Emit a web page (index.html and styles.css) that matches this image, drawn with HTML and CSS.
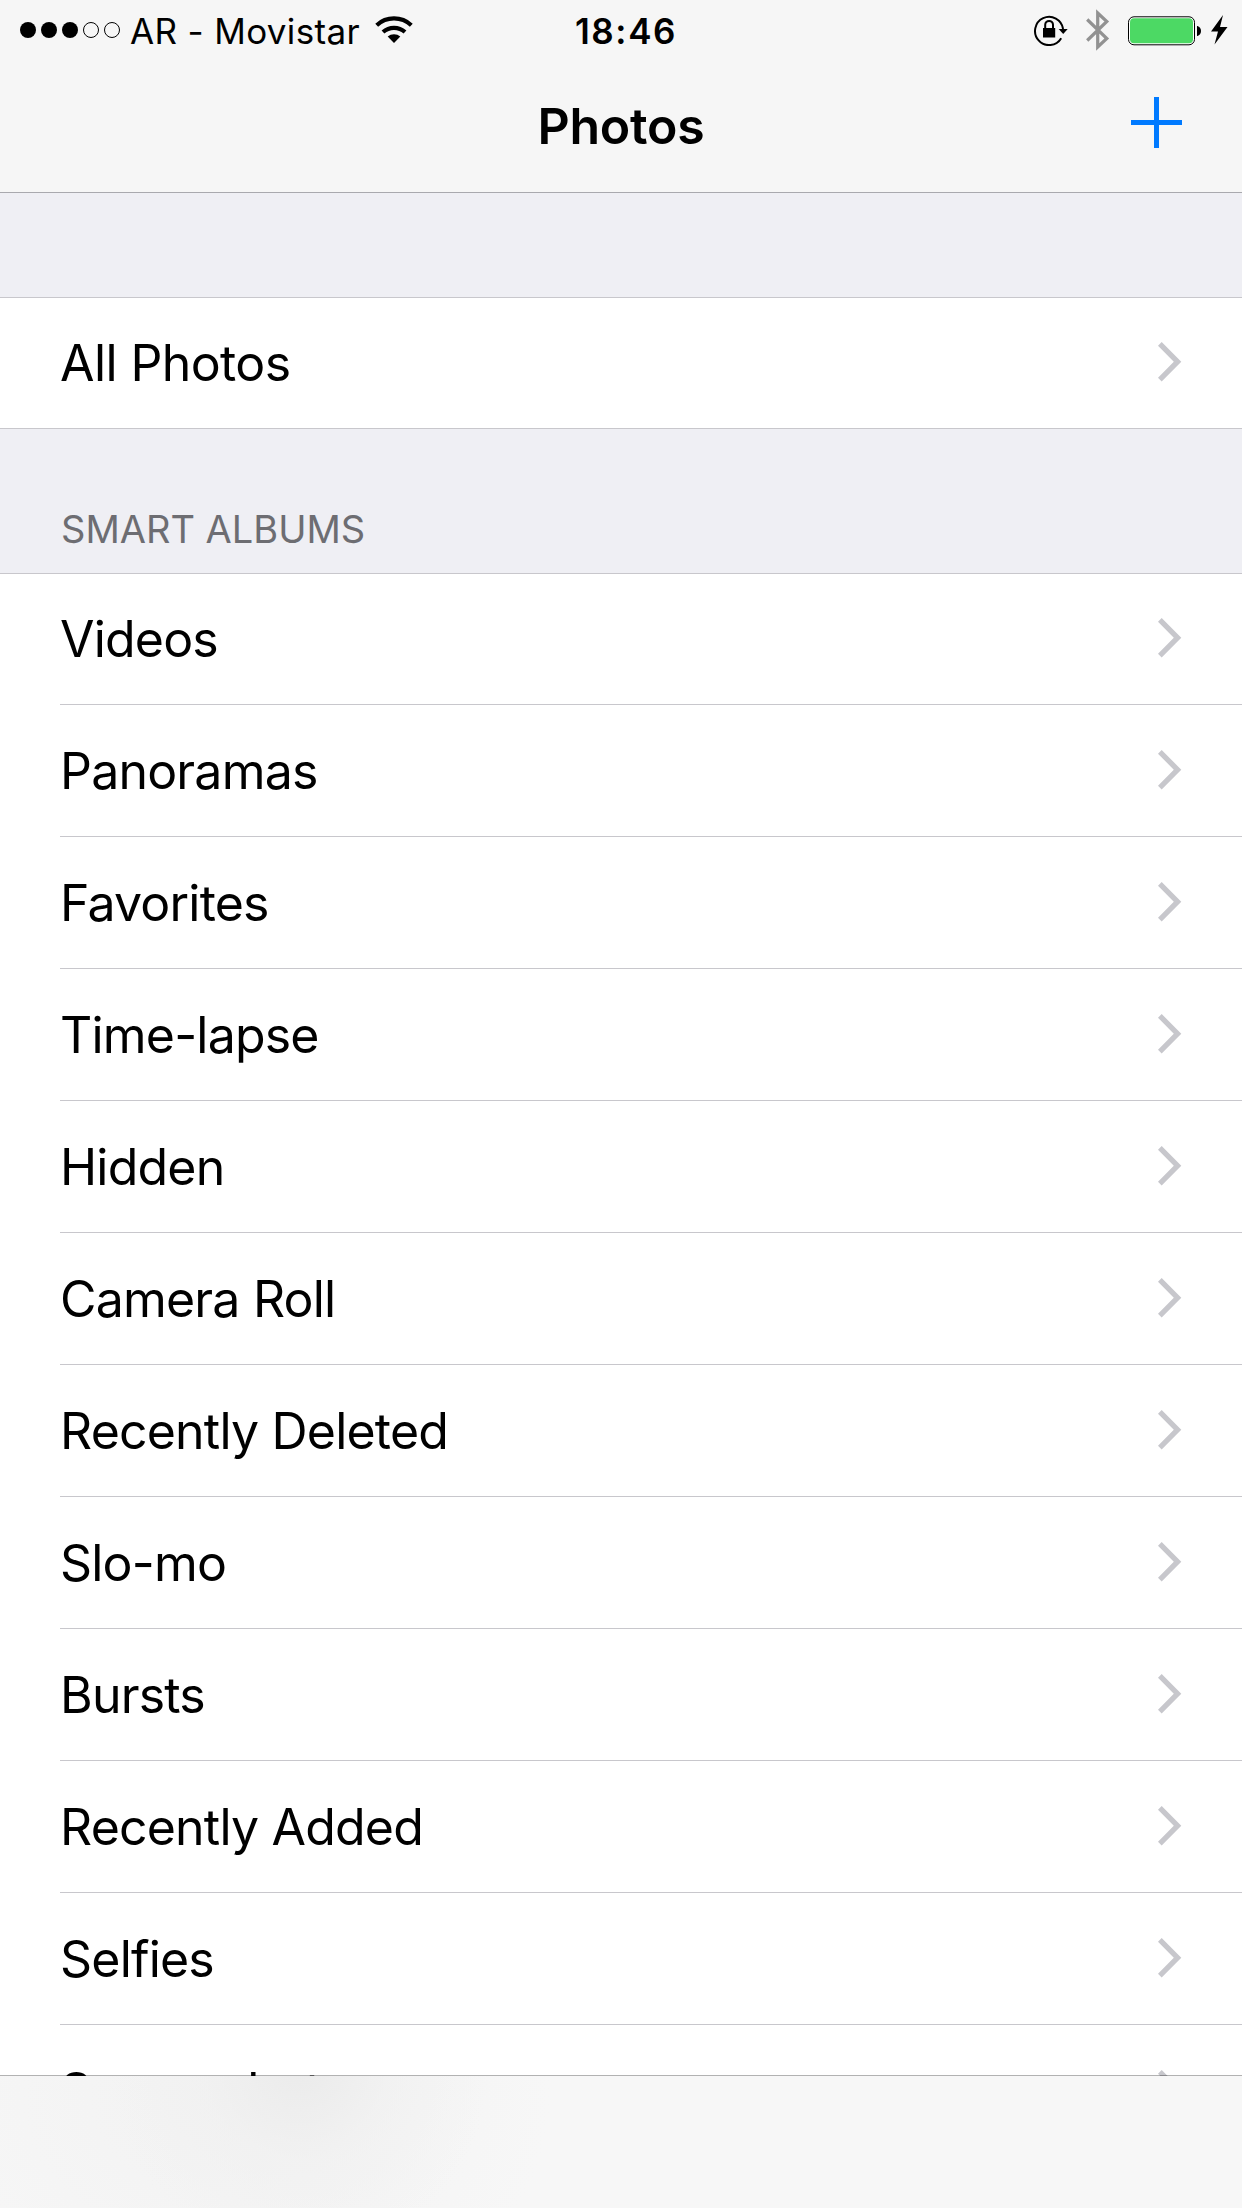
FILE: index.html
```html
<!DOCTYPE html>
<html lang="en">
<head>
<meta charset="utf-8">
<title>Photos</title>
<link rel="stylesheet" href="styles.css">
</head>
<body>
<svg class="defs" width="0" height="0"><symbol id="chevron" viewBox="0 0 24 40"><path d="M3.700 0 23.300 19.700 3.700 39.400 0 35.700 15.800 19.700 0 3.700z" fill="#c7c7cc"/></symbol></svg>
<header class="top">
  <div class="status">
    <div class="status-left">
      <svg width="100" height="16" viewBox="0 0 100 16"><circle cx="8" cy="8" r="8"/><circle cx="29" cy="8" r="8"/><circle cx="50" cy="8" r="8"/><g fill="none" stroke="#000"><circle cx="71" cy="8" r="7.500"/><circle cx="92" cy="8" r="7.500"/></g></svg>
      <span class="carrier">AR - Movistar</span>
      <svg class="wifi" width="38" height="28" viewBox="0 0 38 28"><g fill="none" stroke="#000" stroke-width="4.200"><path d="M1.700 9.200a25.500 25.500 0 0 1 34.600 0"/><path d="M8 16a16.500 16.500 0 0 1 22 0"/></g><path d="M19 27 12.700 20.600a9.300 9.300 0 0 1 12.600 0z"/></svg>
    </div>
    <time class="clock">18:46</time>
    <div class="status-right">
      <svg class="lock" width="35" height="32" viewBox="0 0 35 32"><path d="M27.200 24.300A14.100 14.100 0 1 1 29.100 15" fill="none" stroke="#000" stroke-width="2"/><path d="M24.700 15h9l-4.500 5z"/><path d="M9 14h12.200v9.500H9z"/><path d="M11.200 14v-3.200a3.900 3.900 0 0 1 7.800 0V14" fill="none" stroke="#000" stroke-width="2"/></svg>
      <svg class="bluetooth" width="24" height="42" viewBox="0 0 24 42"><path d="M1.200 10.500 20.800 29.500 11.700 38V4L20.800 12.500 1.200 31.500" fill="none" stroke="#929292" stroke-width="3.200"/></svg>
      <svg class="battery" width="74" height="30" viewBox="0 0 74 30"><rect x=".5" y=".8" width="66" height="28" rx="5.500" fill="#fff" stroke="#000"/><rect x="2" y="2.300" width="63" height="25" rx="4" fill="#4cd964"/><path d="M69 10h.5c2 .5 3.500 2.500 3.500 5s-1.500 4.500-3.500 5H69z"/></svg>
      <svg class="bolt" width="17" height="30" viewBox="0 0 17 30"><path d="M12 0 0 16.500h7L3.500 29.500 16.500 12H9z"/></svg>
    </div>
  </div>
  <nav class="nav">
    <h1>Photos</h1>
    <svg class="add" width="51" height="51" viewBox="0 0 51 51"><path d="M23 0h5v23h23v5H28v23h-5V28H0v-5h23z" fill="#007aff"/></svg>
  </nav>
</header>
<main class="list">
  <section class="group all">
    <a class="row"><span>All Photos</span><svg class="chevron"><use href="#chevron"/></svg></a>
  </section>
  <h2>SMART ALBUMS</h2>
  <section class="group">
    <a class="row"><span>Videos</span><svg class="chevron"><use href="#chevron"/></svg></a>
    <a class="row"><span>Panoramas</span><svg class="chevron"><use href="#chevron"/></svg></a>
    <a class="row"><span>Favorites</span><svg class="chevron"><use href="#chevron"/></svg></a>
    <a class="row"><span>Time-lapse</span><svg class="chevron"><use href="#chevron"/></svg></a>
    <a class="row"><span>Hidden</span><svg class="chevron"><use href="#chevron"/></svg></a>
    <a class="row"><span>Camera Roll</span><svg class="chevron"><use href="#chevron"/></svg></a>
    <a class="row"><span>Recently Deleted</span><svg class="chevron"><use href="#chevron"/></svg></a>
    <a class="row"><span>Slo-mo</span><svg class="chevron"><use href="#chevron"/></svg></a>
    <a class="row"><span>Bursts</span><svg class="chevron"><use href="#chevron"/></svg></a>
    <a class="row"><span>Recently Added</span><svg class="chevron"><use href="#chevron"/></svg></a>
    <a class="row"><span>Selfies</span><svg class="chevron"><use href="#chevron"/></svg></a>
    <a class="row"><span>Screenshots</span><svg class="chevron"><use href="#chevron"/></svg></a>
  </section>
</main>
<footer class="toolbar"></footer>
</body>
</html>
```
FILE: styles.css
```css
* { box-sizing: border-box; }
body {
  margin: 0;
  height: 2208px;
  display: flex;
  flex-direction: column;
  overflow: hidden;
  background: #efeff4;
  color: #000;
  font-family: Inter, "Liberation Sans", sans-serif;
}
svg { display: block; flex: none; }
.defs { display: none; }

.top {
  flex: none;
  height: 193px;
  background: #f6f6f6;
  border-bottom: 1px solid #a9a9ae;
}
.status {
  display: grid;
  grid-template-columns: 1fr auto 1fr;
  height: 60px;
  padding: 0 14px 0 20px;
  font-size: 35px;
  line-height: 62px;
}
.status-left, .status-right { display: flex; align-items: flex-start; }
.status-left > svg:first-child { margin-top: 22px; }
.carrier { margin-left: 10px; letter-spacing: .35px; white-space: nowrap; }
.wifi { margin: 16px 0 0 15px; }
.clock { padding-left: 4px; font-weight: 600; letter-spacing: 1.6px; }
.status-right { justify-content: flex-end; }
.lock { margin: 14px 17px 0 0; }
.bluetooth { margin: 9px 18px 0 0; }
.battery { margin: 16px 9px 0 0; }
.bolt { margin-top: 15px; }

.nav {
  display: grid;
  grid-template-columns: 1fr auto 1fr;
  height: 132px;
  padding: 0 60px;
}
h1 {
  grid-column: 2;
  margin: 0;
  font-size: 50px;
  font-weight: 600;
  line-height: 132px;
  letter-spacing: -.2px;
}
.add { justify-self: end; margin-top: 37px; }

.list { flex: 1; min-height: 0; overflow: hidden; padding-top: 104px; }
.group {
  background: #fff;
  border-top: 1px solid #c8c7cc;
}
.all { border-bottom: 1px solid #c8c7cc; }
.row {
  display: flex;
  align-items: center;
  justify-content: space-between;
  height: 132px;
  margin-left: 60px;
  padding-right: 60px;
  border-bottom: 1px solid #c8c7cc;
  font-size: 50px;
  letter-spacing: -.8px;
}
.row:first-child { height: 131px; }
.all .row:first-child { height: 130px; border: 0; letter-spacing: -.6px; }
.chevron { width: 24px; height: 40px; margin-bottom: 1px; }
.row:first-child .chevron { margin-bottom: 2px; }
h2 {
  height: 144px;
  margin: 0;
  padding: 75px 61px 0;
  color: #6d6d72;
  font-size: 38px;
  font-weight: 400;
  line-height: 50px;
}

.toolbar {
  flex: none;
  position: relative;
  height: 133px;
  margin-top: -1px;
  box-sizing: content-box;
  height: 132px;
  border-top: 1px solid rgba(0, 0, 0, .3);
  background: radial-gradient(ellipse 190px 190px at 300px -10px, rgba(235, 235, 235, 1), rgba(240, 240, 240, .6) 50%, rgba(246, 246, 246, 0)),
    radial-gradient(ellipse 330px 260px at 220px 20px, #f2f2f2, #f7f7f7);
  background-clip: padding-box;
}
```
